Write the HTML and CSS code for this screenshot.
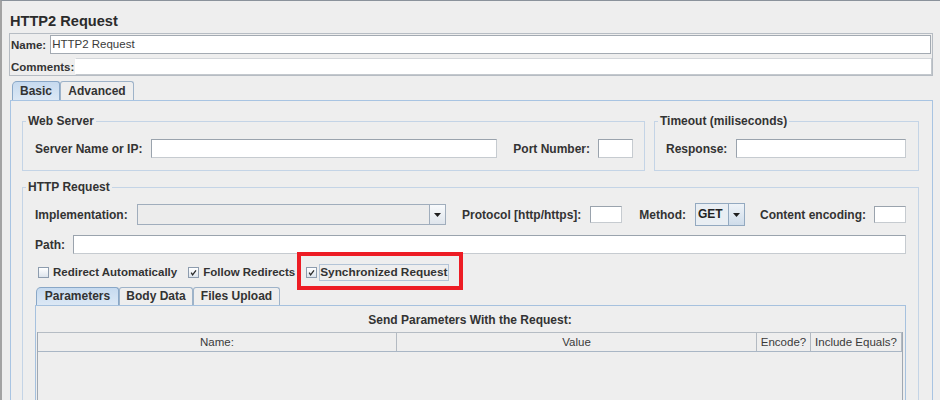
FILE: index.html
```html
<!DOCTYPE html>
<html>
<head>
<meta charset="utf-8">
<link rel="stylesheet" href="styles.css">
</head>
<body>
<div class="window">
  <h1 class="title">HTTP2 Request</h1>
  <div class="name-panel">
    <div class="np-row np-name"><span class="np-lbl">Name:</span><span class="tf tf-name">HTTP2 Request</span></div>
    <div class="np-row np-comments"><span class="np-lbl">Comments:</span><span class="tf tf-comments"></span></div>
  </div>
  <div class="tabs main-tabs"><span class="tab sel w-basic">Basic</span><span class="tab w-adv">Advanced</span></div>
  <div class="tab-panel">
    <div class="top-row">
      <fieldset class="group web-server">
        <legend>Web Server</legend>
        <div class="row ws-row">
          <span class="lbl">Server Name or IP:</span>
          <span class="tf tf-server"></span>
          <span class="lbl lbl-port">Port Number:</span>
          <span class="tf tf-port"></span>
        </div>
      </fieldset>
      <fieldset class="group timeout">
        <legend>Timeout (miliseconds)</legend>
        <div class="row to-row">
          <span class="lbl">Response:</span>
          <span class="tf tf-resp"></span>
        </div>
      </fieldset>
    </div>
    <fieldset class="group http">
      <legend>HTTP Request</legend>
      <div class="http-body">
        <div class="row row-impl">
          <span class="lbl">Implementation:</span>
          <span class="combo combo-impl"><span class="val"></span><span class="btn"><svg width="7" height="4" viewBox="0 0 7 4"><path d="M0 0H7L3.5 4Z" fill="#1e1e1e"/></svg></span></span>
          <span class="lbl lbl-proto">Protocol [http/https]:</span>
          <span class="tf tf-small tf-proto"></span>
          <span class="lbl lbl-method">Method:</span>
          <span class="combo combo-method"><span class="val">GET</span><span class="btn"><svg width="7" height="4" viewBox="0 0 7 4"><path d="M0 0H7L3.5 4Z" fill="#1e1e1e"/></svg></span></span>
          <span class="lbl lbl-enc">Content encoding:</span>
          <span class="tf tf-small tf-enc"></span>
        </div>
        <div class="row row-path">
          <span class="lbl">Path:</span>
          <span class="tf tf-path"></span>
        </div>
        <div class="row checks">
          <span class="check">
            <span class="cb"></span>
            <span class="cl">Redirect Automatically</span>
          </span>
          <span class="check">
            <span class="cb"><svg width="9" height="9" viewBox="0 0 9 9"><path d="M2.2 4.6L3.6 6.8L7 2.4" fill="none" stroke="#2a2a2a" stroke-width="1.3"/></svg></span>
            <span class="cl">Follow Redirects</span>
          </span>
          <span class="check sync">
            <span class="cb"><svg width="9" height="9" viewBox="0 0 9 9"><path d="M2.2 4.6L3.6 6.8L7 2.4" fill="none" stroke="#2a2a2a" stroke-width="1.3"/></svg></span>
            <span class="cl focus">Synchronized Request</span>
            <span class="highlight"></span>
          </span>
        </div>
        <div class="tabs sub-tabs"><span class="tab sel w-params">Parameters</span><span class="tab w-body">Body Data</span><span class="tab w-files">Files Upload</span></div>
        <div class="sub-panel">
          <div class="sp-title">Send Parameters With the Request:</div>
          <div class="table">
            <div class="thead">
              <span class="th c-name">Name:</span>
              <span class="th c-value">Value</span>
              <span class="th c-enc">Encode?</span>
              <span class="th c-eq">Include Equals?</span>
            </div>
            <div class="tbody"></div>
          </div>
        </div>
      </div>
    </fieldset>
  </div>
</div>
</body>
</html>
```
FILE: styles.css
```css
* { box-sizing: border-box; }
html, body { margin: 0; padding: 0; background: #eeeeee; }
body {
  font-family: "Liberation Sans", Arial, sans-serif;
  font-size: 12px;
  color: #333333;
}
.window {
  width: 940px;
  height: 400px;
  overflow: hidden;
  border-top: 1px solid #8a929b;
  border-left: 2px solid #a3a3a3;
  background: #eeeeee;
}
.title {
  margin: 0;
  padding: 11px 0 0 8px;
  font-size: 14.6px;
  line-height: 18px;
  font-weight: bold;
  color: #2b2b2b;
}

/* name / comments panel */
.name-panel {
  margin: 3px 0 0 7px;
  width: 924px;
  border: 1px solid #b6bcc3;
  padding: 1px 0 0 1px;
}
.np-row { display: flex; align-items: center; }
.np-lbl { font-weight: bold; font-size: 11.5px; color: #333; }
.np-name { height: 19px; }
.np-comments { height: 17px; margin-top: 4px; }
.tf {
  display: block;
  height: 19px;
  background: #ffffff;
  border: 1px solid;
  border-color: #9aa3ad #c6cbd0 #c6cbd0 #9aa3ad;
}
.tf-name {
  flex: 1;
  margin-left: 4px;
  margin-right: 1px;
  border-color: #a3aab2;
  font-size: 11.5px;
  line-height: 17px;
  padding-left: 1px;
  color: #3a3a3a;
}
.tf-comments {
  flex: 1;
  height: 17px;
  margin-left: 1px;
  border-color: #d3d6da #c3c8cd #c3c8cd #ffffff;
}

/* tabs */
.tabs { display: flex; }
.tab {
  display: block;
  border: 1px solid #9eb3c9;
  border-bottom: none;
  border-radius: 3px 3px 0 0;
  font-weight: bold;
  text-align: center;
  color: #333;
  background: #eeeeee;
}
.tab.sel {
  background: linear-gradient(#c6daef, #dce8f5);
  border-color: #89a7c7;
  border-top-left-radius: 5px;
}
.main-tabs { margin: 5px 0 0 10px; height: 19px; }
.main-tabs .tab { line-height: 18px; height: 19px; }
.w-basic { width: 48px; }
.w-adv { width: 74px; }

.tab-panel {
  margin-left: 8px;
  width: 923px;
  height: 420px;
  border: 1px solid #a8c4e2;
  padding: 0 13px 0 11px;
}

/* group boxes */
.top-row { display: flex; gap: 9px; margin-top: 13px; }
.group {
  margin: 0;
  padding: 0;
  min-width: 0;
  border: 1px solid #c4d4e6;
}
.group legend {
  padding: 0 2px;
  margin-left: 3px;
  font-weight: bold;
  font-size: 12px;
  line-height: 14px;
  color: #333;
}
.web-server { width: 623px; flex: none; }
.timeout { flex: 1; }
.row { display: flex; align-items: center; }
.lbl { font-weight: bold; white-space: nowrap; color: #333; flex: none; }
.ws-row { padding: 11px 11px 12px 12px; }
.to-row { padding: 11px 12px 12px 11px; }
.tf-server { flex: 1; margin-left: 9px; }
.lbl-port { margin-left: 16px; }
.tf-port { width: 35px; margin-left: 8px; }
.tf-resp { flex: 1; margin-left: 9px; }

.http { margin-top: 9px; }
.http-body { padding: 9px 12px 0 12px; }
.row-impl { height: 23px; }
.combo {
  display: flex;
  height: 21px;
  border: 1px solid #a0adbc;
  background: #ececec;
}
.combo .val { flex: 1; }
.combo .btn {
  width: 16px;
  border-left: 1px solid #a0adbc;
  background: linear-gradient(#f8fafc, #dfe5ec);
  display: flex;
  align-items: center;
  justify-content: center;
}
.combo-impl { flex: 1; margin-left: 9px; min-width: 0; }
.lbl-proto { margin-left: 16px; }
.tf-small { height: 17px; width: 32px; flex: none; }
.tf-proto { margin-left: 9px; }
.lbl-method { margin-left: 17px; }
.combo-method {
  width: 50px;
  height: 23px;
  margin-left: 9px;
  flex: none;
  border-color: #93a9c0;
  background: #e9eef3;
}
.combo-method .val {
  font-weight: bold;
  line-height: 20px;
  padding-left: 2px;
  color: #222;
}
.combo-method .btn {
  border-left-color: #93a9c0;
  background: linear-gradient(#eef3f8, #cfdcea);
}
.lbl-enc { margin-left: 15px; }
.tf-enc { margin-left: 8px; }

.row-path { height: 19px; margin-top: 9px; }
.tf-path { flex: 1; margin-left: 8px; }

.checks { height: 17px; margin-top: 10px; padding-left: 3px; }
.check { display: flex; align-items: center; height: 17px; }
.check + .check { margin-left: 9px; }
.cb {
  width: 11px;
  height: 11px;
  border: 1px solid #8d9cae;
  background: linear-gradient(#ffffff, #dde4ec);
  display: flex;
  align-items: center;
  justify-content: center;
}
.cl {
  margin-left: 2px;
  padding: 0 1px;
  border: 1px solid transparent;
  font-weight: bold;
  font-size: 11.5px;
  line-height: 15px;
  color: #333;
  white-space: nowrap;
}
.cl.focus { border-color: #b3c4d7; font-size: 11.8px; padding: 0 1px 0 0; }
.sync { position: relative; }
.highlight {
  position: absolute;
  left: -9px;
  top: -12px;
  width: 166px;
  height: 38px;
  border: 4px solid #ed1c24;
}

.sub-tabs { margin: 6px 0 0 1px; height: 18px; }
.sub-tabs .tab { line-height: 17px; height: 18px; }
.w-params { width: 83px; }
.w-body { width: 74px; }
.w-files { width: 87px; }

.sub-panel {
  height: 200px;
  border: 1px solid #a6c1de;
  padding: 7px 2px 0 1px;
}
.sp-title {
  text-align: center;
  font-weight: bold;
  line-height: 14px;
  color: #333;
}
.table {
  margin-top: 5px;
  border-left: 1px solid #a0a8b2;
  border-right: 1px solid #a0a8b2;
}
.thead {
  display: flex;
  height: 20px;
  border-top: 1px solid #b5bcc4;
  border-bottom: 1px solid #a9b6c5;
}
.th {
  display: block;
  border-right: 1px solid #b3bac2;
  text-align: center;
  font-size: 11.5px;
  line-height: 18px;
  color: #3a3a3a;
  white-space: nowrap;
}
.c-name { width: 359px; }
.c-value { width: 360px; }
.c-enc { width: 54px; }
.c-eq { width: 91px; }
.tbody { height: 80px; }
```
